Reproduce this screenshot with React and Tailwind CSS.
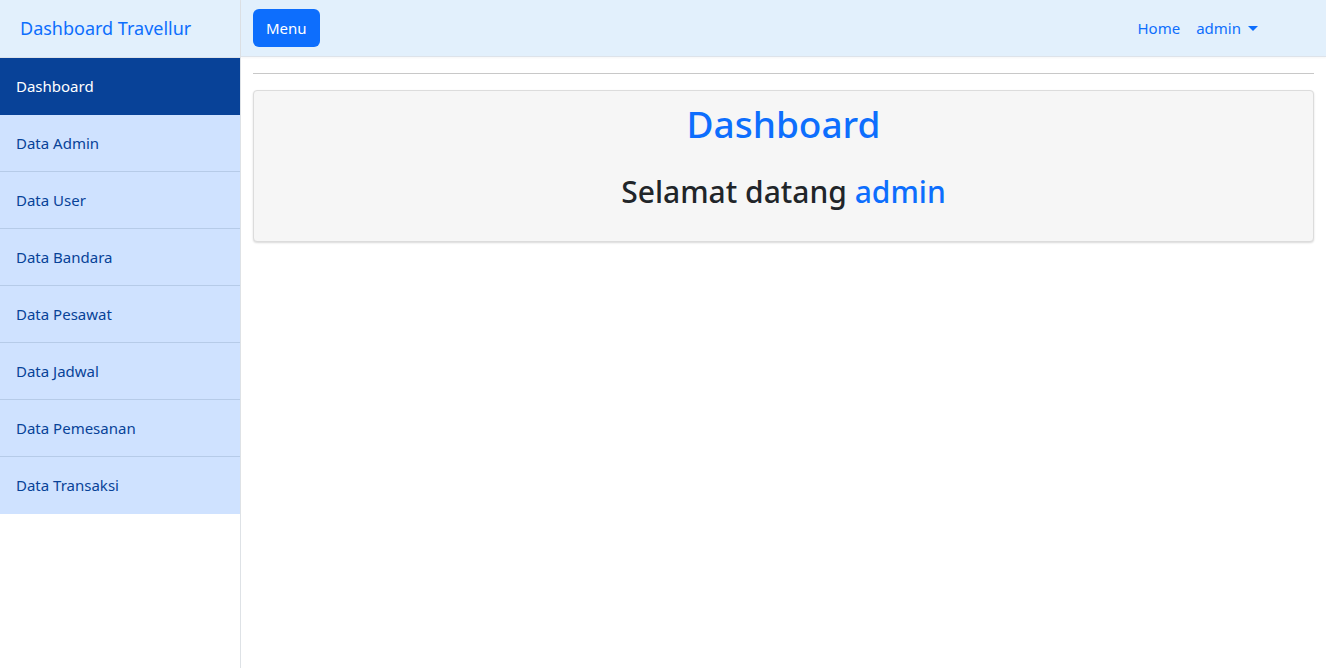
import React from "react";

const items = [
  "Data Admin",
  "Data User",
  "Data Bandara",
  "Data Pesawat",
  "Data Jadwal",
  "Data Pemesanan",
  "Data Transaksi",
];

export default function App() {
  return (
    <div
      className="flex min-h-[668px] w-full bg-white"
      style={{ fontFamily: '"Noto Sans", "Open Sans", sans-serif' }}
    >
      <aside className="w-[241px] shrink-0 border-r border-[#dee2e6] bg-white">
        <div className="flex h-[58px] items-center border-b border-[#dde3ea] bg-[#e2f0fc] pl-[20px] text-[18px] text-[#0d6efd]">
          Dashboard Travellur
        </div>
        <div className="flex h-[57px] items-center bg-[#084298] pl-4 text-[15px] text-white">
          Dashboard
        </div>
        {items.map((t, i) => (
          <div
            key={t}
            className={`flex h-[57px] items-center bg-[#cfe2ff] pl-4 text-[15px] text-[#084298] ${
              i < items.length - 1 ? "border-b border-[#b6cbe8]" : ""
            }`}
          >
            {t}
          </div>
        ))}
      </aside>
      <main className="flex-1">
        <nav className="flex h-[57px] items-center justify-between border-b border-[#dde3ea] bg-[#e2f0fc] pl-3 pr-[68px] shadow-[0_1px_2px_rgba(0,0,0,0.04)]">
          <button className="h-[38px] rounded-[6px] bg-[#0d6efd] px-[13px] text-[15px] text-white">
            Menu
          </button>
          <div className="flex items-center gap-4 text-[15px] text-[#0d6efd]">
            <span>Home</span>
            <span className="flex items-center gap-[7px]">
              admin
              <span className="inline-block h-0 w-0 border-x-[5px] border-t-[5px] border-x-transparent border-t-[#0d6efd]" />
            </span>
          </div>
        </nav>
        <div className="px-3">
          <div className="mt-4 border-t border-[#c8c8c8]" />
          <div className="mt-4 rounded-[4px] border border-[#dcdcdc] bg-[#f6f6f6] pb-[31px] pt-[11px] text-center shadow-[0_1px_2px_rgba(0,0,0,0.15)]">
            <h1 className="text-[37px] font-medium leading-[1.2] text-[#0d6efd]">
              Dashboard
            </h1>
            <h2 className="mt-[28px] text-[30px] font-medium leading-[1.2] text-[#212529]">
              Selamat datang <span className="text-[#0d6efd]">admin</span>
            </h2>
          </div>
        </div>
      </main>
    </div>
  );
}
